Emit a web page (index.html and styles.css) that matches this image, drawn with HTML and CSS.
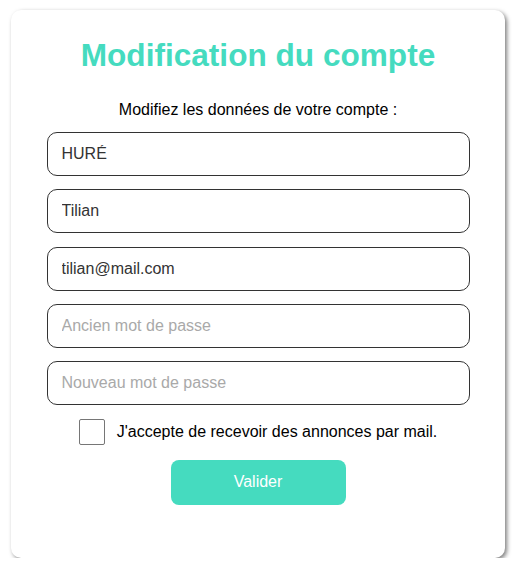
FILE: index.html
```html
<!DOCTYPE html>
<html lang="fr">
<head>
<meta charset="utf-8">
<title>Modification du compte</title>
<link rel="stylesheet" href="styles.css">
</head>
<body>
<main class="card">
  <h1 class="title">Modification du compte</h1>
  <p class="subtitle">Modifiez les données de votre compte :</p>
  <form class="form">
    <input class="field" type="text" value="HURÉ">
    <input class="field" type="text" value="Tilian">
    <input class="field" type="email" value="tilian@mail.com">
    <input class="field" type="password" placeholder="Ancien mot de passe">
    <input class="field" type="password" placeholder="Nouveau mot de passe">
    <label class="check-row">
      <input class="check" type="checkbox">
      <span>J'accepte de recevoir des annonces par mail.</span>
    </label>
    <button class="submit" type="button">Valider</button>
  </form>
</main>
</body>
</html>
```
FILE: styles.css
```css
* { box-sizing: border-box; }
html, body { margin: 0; padding: 0; background: #fff; }
body {
  font-family: "Liberation Sans", Arial, sans-serif;
  padding: 10px 0 0 11px;
}
.card {
  width: 494px;
  height: 548px;
  background: #fff;
  border-radius: 10px;
  box-shadow: 2px 2px 4px rgba(0,0,0,0.5);
  padding: 27px 36px 0 36px;
  display: flex;
  flex-direction: column;
  align-items: center;
}
.title {
  margin: 0;
  font-size: 31.6px;
  font-weight: bold;
  color: #45dbbf;
  line-height: 37px;
  text-align: center;
}
.subtitle {
  margin: 27px 0 0 0;
  font-size: 16px;
  line-height: 18px;
  color: #000;
  text-align: center;
}
.form {
  margin-top: 13px;
  width: 423px;
  display: flex;
  flex-direction: column;
  align-items: center;
  gap: 13.25px;
}
.field {
  width: 423px;
  height: 44px;
  margin: 0;
  border: 1px solid #333;
  border-radius: 10px;
  padding: 0 14px;
  font-family: "Liberation Sans", Arial, sans-serif;
  font-size: 16px;
  color: #333;
  background: #fff;
  outline: none;
}
.field::placeholder { color: #a9a9a9; }
.check-row {
  display: flex;
  align-items: center;
  gap: 12px;
  font-size: 16px;
  color: #000;
  margin-top: 1px;
}
.check {
  appearance: none;
  -webkit-appearance: none;
  width: 26px;
  height: 26px;
  margin: 0;
  border: 1px solid #767676;
  border-radius: 2px;
  background: #fff;
}
.submit {
  width: 175px;
  height: 45px;
  margin-top: 1px;
  border: none;
  border-radius: 8px;
  background: #45dbbf;
  color: #fff;
  font-family: "Liberation Sans", Arial, sans-serif;
  font-size: 16px;
}
```
